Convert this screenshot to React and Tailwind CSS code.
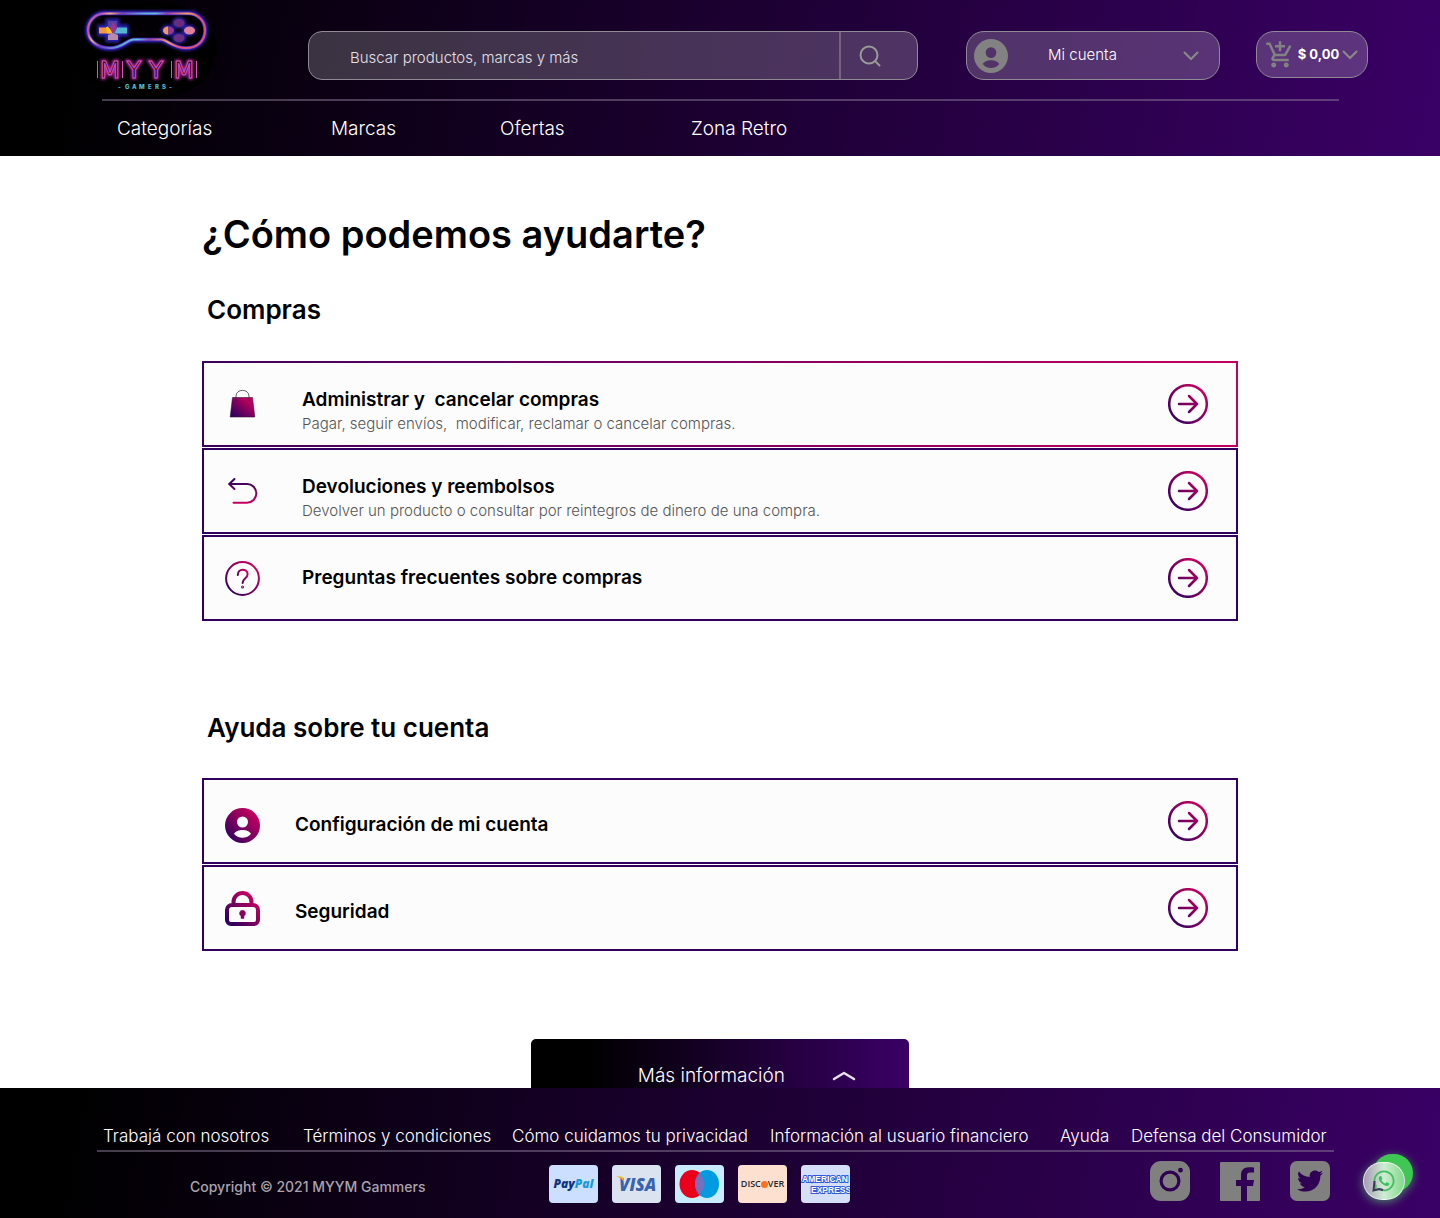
import { MdOutlineAddShoppingCart } from "react-icons/md";
import { FaTwitter, FaWhatsapp } from "react-icons/fa";

const padPath =
  "M35 13.500H118C127 13.500 135 20 135 30.500C135 41 127 48 116 48C103 48 97 39.500 91 39.500H64C57 39.500 53 48 40 48C27 48 18 40 18 30.500C18 21 25 13.500 35 13.500Z";

function BrandLogo() {
  return (
    <svg viewBox="0 0 148 98" className="h-[98px] w-[148px]" role="img" aria-label="MYYM Gamers">
      <defs>
        <linearGradient id="pad" x1="0" y1="0" x2="1" y2="0.2">
          <stop offset="0" stopColor="#f5895a" />
          <stop offset="0.1" stopColor="#b04ab8" />
          <stop offset="0.18" stopColor="#f0b070" />
          <stop offset="0.28" stopColor="#7a3fb0" />
          <stop offset="0.45" stopColor="#63a5d8" />
          <stop offset="0.55" stopColor="#5fc0d8" />
          <stop offset="0.65" stopColor="#9a3fa8" />
          <stop offset="0.82" stopColor="#f5a05a" />
          <stop offset="0.93" stopColor="#e0527a" />
          <stop offset="1" stopColor="#e0527a" />
        </linearGradient>
        <filter id="glow" x="-20%" y="-40%" width="140%" height="180%">
          <feGaussianBlur stdDeviation="1.500" />
        </filter>
      </defs>
      <rect x="2" y="2" width="145" height="96" rx="60" ry="48" fill="#000" />
      <path d={padPath} fill="none" stroke="#3a22d8" strokeWidth="5" filter="url(#glow)" />
      <path d={padPath} fill="#020004" stroke="#4028c8" strokeWidth="3.500" />
      <path d={padPath} fill="none" stroke="url(#pad)" strokeWidth="2" />
      <path d="M29 26h8v-6h11v6h9v9h-9v6H37v-6h-8z" fill="#2a22b0" stroke="#2a22b0" strokeWidth="3" filter="url(#glow)" />
      <path d="M29 27.500h10l4 6h-14z" fill="#f7973c" />
      <path d="M36 27.500l5-3 2 9h-6z" fill="#fcc22c" />
      <path d="M47 27.500h10v6H44z" fill="#52b8d0" />
      <path d="M38 21h9v7l-4 4-5-5z" fill="#54409e" />
      <path d="M43 22l4 6-4 7-3-7z" fill="#9a3596" />
      <path d="M38 40v-5l5-2 5 2v5z" fill="#b58cae" />
      <g fill="#2a22b0" stroke="#2a22b0" strokeWidth="3" filter="url(#glow)">
        <ellipse cx="109" cy="23" rx="5.500" ry="4" />
        <ellipse cx="98" cy="30.500" rx="5.500" ry="4" />
        <ellipse cx="119" cy="30.500" rx="5.500" ry="4" />
        <ellipse cx="109" cy="38" rx="5.500" ry="4" />
      </g>
      <ellipse cx="109" cy="23" rx="5.500" ry="4" fill="#6a2a80" />
      <ellipse cx="98.500" cy="30.500" rx="5.500" ry="4" fill="#8c3a98" />
      <path d="M98 26.500a5 4 0 0 0 0 8z" fill="#f09a58" />
      <ellipse cx="119.500" cy="30.500" rx="5.500" ry="4" fill="#e0809a" />
      <ellipse cx="109" cy="38" rx="5.500" ry="4" fill="#6b2f88" />
      <g fontFamily="DejaVu Sans, sans-serif" fontSize="23">
        <text x="30 57 79 104" y="78" fill="none" stroke="#b0209a" strokeWidth="3" filter="url(#glow)">MYYM</text>
        <text x="30 57 79 104" y="78" fill="#1c0018" stroke="#d653bd" strokeWidth="1">MYYM</text>
      </g>
      <path d="M27.500 61v17M52.500 61v17M101.500 61v17M126.500 61v17" stroke="#d653bd" strokeWidth="1" />
      <text x="48 55 62 69 78 85 92 99" y="89" fontFamily="Inter, sans-serif" fontSize="6" fontWeight="800" fill="#4fc0d4">-GAMERS-</text>
    </svg>
  );
}

function Gradients() {
  return (
    <svg className="absolute h-0 w-0" aria-hidden="true">
      <defs>
        <linearGradient id="brand" x1="0" y1="1" x2="1" y2="0">
          <stop offset="0.1" stopColor="#34005f" />
          <stop offset="0.9" stopColor="#d1005e" />
        </linearGradient>
        <linearGradient id="brandArrow" gradientUnits="userSpaceOnUse" x1="4" y1="36" x2="36" y2="4">
          <stop offset="0" stopColor="#34005f" />
          <stop offset="1" stopColor="#d1005e" />
        </linearGradient>
        <linearGradient id="brandDown" gradientUnits="userSpaceOnUse" x1="0" y1="5" x2="0" y2="30">
          <stop offset="0.1" stopColor="#34005f" />
          <stop offset="1" stopColor="#d1005e" />
        </linearGradient>
      </defs>
    </svg>
  );
}

const userPath =
  "M17.500 0a17.500 17.500 0 1 1 0 35a17.500 17.500 0 1 1 0-35zM17.500 8.500a5.500 5.500 0 1 0 0 11a5.500 5.500 0 1 0 0-11zM9 25.800c1.200-2.500 5-3.900 8.500-3.900s7.300 1.400 8.500 3.900c-2 2.700-5 4-8.500 4s-6.500-1.300-8.500-4z";

function UserIcon({ fill, className }) {
  return (
    <svg viewBox="0 0 35 35" className={className} aria-hidden="true">
      <path fillRule="evenodd" fill={fill} d={userPath} />
    </svg>
  );
}

const iconSize = "size-[35px]";

function BagIcon() {
  return (
    <svg viewBox="0 0 35 35" className={iconSize} aria-hidden="true">
      <path d="M7.500 10.500h20l2.300 19.500H5.200z" fill="url(#brand)" stroke="#3b1038" strokeWidth="0.600" />
      <path d="M11 14v-5c0-7.500 13-7.500 13 0v5" fill="none" stroke="#222" strokeWidth="0.700" />
    </svg>
  );
}

function ReturnIcon() {
  return (
    <svg viewBox="0 0 35 35" className={iconSize} fill="none" stroke="url(#brandDown)" strokeWidth="2" strokeLinecap="round" strokeLinejoin="round" aria-hidden="true">
      <path d="M4.500 10H22a9.300 9.300 0 0 1 0 18.700H8.500" />
      <path d="M9.500 5l-5.300 5 5.300 5" />
    </svg>
  );
}

function QuestionIcon() {
  return (
    <svg viewBox="0 0 35 35" className={iconSize} fill="none" stroke="url(#brand)" strokeWidth="2" strokeLinecap="round" aria-hidden="true">
      <circle cx="17.500" cy="17.500" r="16.400" />
      <path d="M12.800 14c0-7.200 9.800-6.700 9.800-.8 0 4.500-5 4.300-5 8.800" />
      <circle cx="17.600" cy="26" r="0.500" />
    </svg>
  );
}

function LockIcon() {
  return (
    <svg viewBox="0 0 35 35" className={iconSize} fill="none" stroke="url(#brand)" strokeWidth="4" aria-hidden="true">
      <path d="M2 19a5 5 0 0 1 5-5h21a5 5 0 0 1 5 5v10a4 4 0 0 1-4 4H6a4 4 0 0 1-4-4zM8.500 14v-3a9 9 0 0 1 18 0V14" />
      <path d="M17.500 19.300a3 3 0 0 1 1.500 5.600v2.500h-3v-2.500a3 3 0 0 1 1.500-5.600z" fill="#8c0060" stroke="#8c0060" strokeWidth="0.500" />
    </svg>
  );
}

function ArrowIcon() {
  return (
    <svg viewBox="0 0 40 40" className="size-10 shrink-0" fill="none" stroke="url(#brandArrow)" strokeWidth="2.500" strokeLinecap="round" strokeLinejoin="round" aria-hidden="true">
      <circle cx="20" cy="20" r="18.800" />
      <path d="M11 20h18M29 20l-8 8M29 20l-8-8" />
    </svg>
  );
}

function Chevron() {
  return (
    <svg viewBox="0 0 16 10" className="h-[10px] w-4 shrink-0" fill="none" stroke="#8a8a8a" strokeWidth="2" strokeLinecap="round" aria-hidden="true">
      <path d="M1.500 1.500L8 8l6.500-6.500" />
    </svg>
  );
}

const purchases = [
  {
    title: "Administrar y  cancelar compras",
    text: "Pagar, seguir envíos,  modificar, reclamar o cancelar compras.",
    icon: <BagIcon />,
    active: true,
  },
  {
    title: "Devoluciones y reembolsos",
    text: "Devolver un producto o consultar por reintegros de dinero de una compra.",
    icon: <ReturnIcon />,
  },
  { title: "Preguntas frecuentes sobre compras", icon: <QuestionIcon /> },
];

const account = [
  { title: "Configuración de mi cuenta", icon: <UserIcon fill="url(#brand)" className={iconSize + " mt-2"} /> },
  { title: "Seguridad", icon: <LockIcon /> },
];

function HelpCard({ item, near }) {
  return (
    <a
      href="#ayuda"
      className={
        "flex min-h-[86px] items-center border-2 pl-[21px] pr-7 " +
        (item.active
          ? "border-transparent [background:linear-gradient(#fcfcfc,#fcfcfc)_padding-box,linear-gradient(to_right,#3d0060,#c3005f)_border-box]"
          : "border-[#34005f] bg-[#fcfcfc]")
      }
    >
      <span className="shrink-0">{item.icon}</span>
      <span className={"flex-1 whitespace-pre-wrap " + (near ? "pl-[35px] pt-2" : item.text ? "pl-[42px] pt-4" : "pl-[42px]")}>
        <span className="block text-[19px] leading-6 font-semibold text-black">{item.title}</span>
        {item.text && <span className="block text-[15px] leading-6 font-light text-[#555]">{item.text}</span>}
      </span>
      <ArrowIcon />
    </a>
  );
}

const cardBox = "flex h-[38px] w-[49px] items-center justify-center overflow-hidden rounded-[4px] ";

function Payments() {
  return (
    <ul className="flex gap-[14px]">
      <li className={cardBox + "bg-[#cddfff] font-['Open_Sans',sans-serif] text-[12px] font-extrabold italic"}>
        <span className="text-[#0f3480]">Pay</span>
        <span className="text-[#189bd7]">Pal</span>
      </li>
      <li className={cardBox + "bg-[#dbe3f1]"}>
        <svg viewBox="0 0 49 38" className="h-[38px] w-[49px]" role="img" aria-label="VISA">
          <text x="7" y="26" fontFamily="Open Sans, sans-serif" fontSize="17" fontWeight="800" fontStyle="italic" fill="#3a63ad">VISA</text>
          <path d="M4 11.500h5c1.500 0 2 .8 2.300 2l.8 4c-1.500-3-4-5-8.100-6z" fill="#f3ae22" />
        </svg>
      </li>
      <li className={cardBox + "bg-[#c8ecfd]"}>
        <svg viewBox="0 0 49 38" className="h-[38px] w-[49px]" role="img" aria-label="Maestro">
          <ellipse cx="17" cy="19" rx="12.500" ry="14" fill="#eb001b" />
          <ellipse cx="32" cy="19" rx="12" ry="14" fill="#009be1" />
          <path d="M24.500 8.500c6.700 6 6.700 15 0 21c-6-6-6-15 0-21z" fill="#7370c0" />
        </svg>
      </li>
      <li className={cardBox + "bg-[#fde0cf] font-['Open_Sans',sans-serif] text-[9px] font-semibold text-[#26282c]"}>
        DISC<span className="size-[7px] rounded-full bg-[#fb7320]" />VER
      </li>
      <li className={cardBox + "bg-[#d5dff7]"}>
        <svg viewBox="0 0 49 38" className="h-[38px] w-[49px]" role="img" aria-label="American Express">
          <g fontFamily="Liberation Sans, sans-serif" fontSize="8.500" fontWeight="700" fill="#fff" stroke="#2f5bdc" strokeWidth="2" paintOrder="stroke">
            <text x="1" y="17">AMERICAN</text>
            <text x="10" y="28">EXPRESS</text>
          </g>
        </svg>
      </li>
    </ul>
  );
}

function Socials() {
  return (
    <div className="flex gap-[30px]">
      <a href="#instagram" aria-label="Instagram">
        <svg viewBox="0 0 40 40" className="size-10">
          <path fillRule="evenodd" fill="#808080" d="M11 0h18a11 11 0 0 1 11 11v18a11 11 0 0 1-11 11H11A11 11 0 0 1 0 29V11A11 11 0 0 1 11 0zM20 9.500a10.500 10.500 0 1 0 0 21a10.500 10.500 0 1 0 0-21zM30.500 6.800a2.400 2.400 0 1 0 0 4.800a2.400 2.400 0 1 0 0-4.800z" />
          <circle cx="20" cy="20" r="7.300" fill="#808080" />
        </svg>
      </a>
      <a href="#facebook" aria-label="Facebook">
        <svg viewBox="0 0 40 40" className="size-10">
          <path fill="#808080" d="M1 1h38a1 1 0 0 1 1 1v37a1 1 0 0 1-1 1H27V25h6l1-6h-7v-4.500c0-2 .8-3 3-3h4V6.500c-1-.2-3-.3-5-.3-5.500 0-8 3-8 8V19h-5v6h5v15H1a1 1 0 0 1-1-1V2a1 1 0 0 1 1-1z" />
        </svg>
      </a>
      <a href="#twitter" aria-label="Twitter" className="flex size-10 items-center justify-center rounded-[7px] bg-[#808080]">
        <FaTwitter className="size-[26px] text-[#2f0054]" />
      </a>
    </div>
  );
}

function WhatsApp() {
  return (
    <a href="#whatsapp" aria-label="WhatsApp" className="relative block h-[46px] w-[50px] drop-shadow-[0_2px_5px_rgba(90,220,110,0.6)]">
      <span className="absolute right-0 top-0 h-[38px] w-10 rounded-full bg-[#3fc653]" />
      <span className="absolute bottom-0 left-0 flex h-[38px] w-[42px] items-center justify-center rounded-full border border-white/70 bg-linear-to-r from-[#a79bb5] via-[#cdeed1] to-[#7fd88c]">
        <FaWhatsapp className="size-6 text-[#41bd5e]" />
        <svg viewBox="0 0 12 12" className="absolute bottom-[7px] left-[8px] size-3" fill="none" stroke="#3a3a58" strokeWidth="2" aria-hidden="true">
          <path d="M2.500 1L1.500 10.500L7 9l4 1" />
        </svg>
      </span>
    </a>
  );
}

const pill = "flex items-center border border-[#8f8a94] bg-white/20 ";

export default function App() {
  return (
    <div className="bg-white font-['Inter',sans-serif] text-black">
      <Gradients />
      <header className="bg-linear-100/srgb from-black from-5% to-[#3a0066] pb-[13px] text-white">
        <div className="flex h-[99px] items-start pl-[70px] pr-[72px]">
          <a href="#inicio" className="shrink-0">
            <BrandLogo />
          </a>
          <form className={pill + "mt-[31px] ml-[90px] h-[49px] flex-1 rounded-[14px]"}>
            <input
              type="text"
              aria-label="Buscar productos"
              placeholder="Buscar productos, marcas y más"
              className="h-full min-w-0 flex-1 bg-transparent pl-[41px] pt-1 text-[15px] font-light outline-none placeholder:text-[#e4e0e6]"
            />
            <button type="button" aria-label="Buscar" className="h-full w-[78px] border-l-2 border-[#74647e] pl-[18px]">
              <svg viewBox="0 0 22 22" className="size-[22px]" fill="none" stroke="#999" strokeWidth="2" strokeLinecap="round">
                <circle cx="10" cy="10" r="8.500" />
                <path d="M16 16l4.500 4.500" />
              </svg>
            </button>
          </form>
          <button type="button" className={pill + "mt-[31px] ml-12 h-[49px] w-[254px] rounded-[18px] pl-[7px] pr-5"}>
            <UserIcon fill="#828282" className="size-[34px]" />
            <span className="flex-1 pr-[26px] text-center text-[15px] font-light">Mi cuenta</span>
            <Chevron />
          </button>
          <button type="button" className={pill + "mt-[31px] ml-9 h-[47px] w-28 justify-between rounded-[18px] pl-[8px] pr-[9px]"}>
            <MdOutlineAddShoppingCart className="size-[30px] text-[#828282]" />
            <span className="text-[13px] font-bold">$ 0,00</span>
            <Chevron />
          </button>
        </div>
        <hr className="ml-[102px] mr-[101px] border-t-2 border-[#8a7a95]/50" />
        <nav className="grid grid-cols-[214px_169px_191px_auto] pl-[117px] pt-[13px] text-[19px] leading-[29px] font-light">
          <a href="#categorias">Categorías</a>
          <a href="#marcas">Marcas</a>
          <a href="#ofertas">Ofertas</a>
          <a href="#retro">Zona Retro</a>
        </nav>
      </header>

      <main className="mx-auto max-w-[1036px] pt-[54px]">
        <h1 className="text-[38px] leading-12 font-semibold">¿Cómo podemos ayudarte?</h1>
        <section>
          <h2 className="pl-[5px] pt-9 text-[26px] leading-8 font-semibold">Compras</h2>
          <div className="mt-[35px] flex flex-col gap-px">
            {purchases.map((item) => (
              <HelpCard key={item.title} item={item} />
            ))}
          </div>
        </section>
        <section className="pt-[91px]">
          <h2 className="pl-[5px] text-[26px] leading-8 font-semibold">Ayuda sobre tu cuenta</h2>
          <div className="mt-[34px] flex flex-col gap-px">
            {account.map((item) => (
              <HelpCard key={item.title} item={item} near />
            ))}
          </div>
        </section>
      </main>

      <button type="button" className="mx-auto mt-[88px] flex h-[49px] w-[378px] items-end justify-end rounded-t-[5px] bg-linear-to-r/srgb from-black from-15% to-[#3a0066] pr-[52px] text-white">
        <span className="pr-[46px] text-[19px] leading-6 font-light">Más información</span>
        <svg viewBox="0 0 26 10" className="mb-[7px] h-[10px] w-[26px]" fill="none" stroke="#e6e0ea" strokeWidth="2.500" strokeLinecap="round" strokeLinejoin="round" aria-hidden="true">
          <path d="M3 8l10-6 10 6" />
        </svg>
      </button>

      <footer className="bg-linear-100/srgb from-black from-5% to-[#3a0066] pt-[35px] text-white">
        <nav className="ml-[103px] mr-[112px] grid grid-cols-[200fr_209fr_258fr_290fr_71fr_197fr] text-[17px] leading-[27px] font-light whitespace-nowrap">
          <a href="#trabaja">Trabajá con nosotros</a>
          <a href="#terminos">Términos y condiciones</a>
          <a href="#privacidad">Cómo cuidamos tu privacidad</a>
          <a href="#usuario">Información al usuario financiero</a>
          <a href="#ayuda">Ayuda</a>
          <a href="#defensa">Defensa del Consumidor</a>
        </nav>
        <hr className="ml-[97px] mr-[106px] border-t-2 border-[#8a7a95]/50" />
        <div className="flex items-start pb-[15px] pl-[190px] pr-[27px]">
          <p className="w-[359px] pt-[23px] text-[14px] leading-6 font-medium text-[#a9a3ae]">Copyright © 2021 MYYM Gammers</p>
          <div className="flex-1 pt-[13px]">
            <Payments />
          </div>
          <div className="pt-[9px]">
            <Socials />
          </div>
          <div className="pl-[33px] pt-[2px]">
            <WhatsApp />
          </div>
        </div>
      </footer>
    </div>
  );
}
